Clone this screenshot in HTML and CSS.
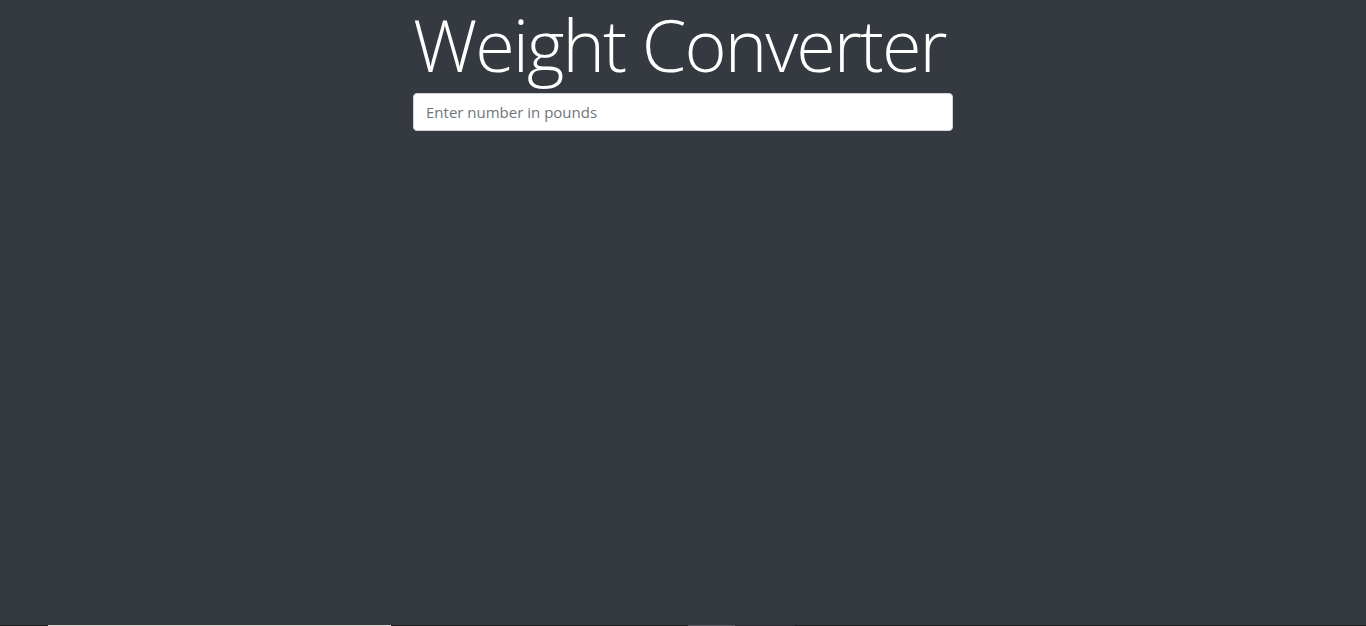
FILE: index.html
```html
<!DOCTYPE html>
<html lang="en">
<head>
  <meta charset="UTF-8">
  <title>Weight Converter</title>
  <link rel="stylesheet" href="styles.css">
</head>
<body>
  <div class="container">
    <div class="col">
      <h1 class="title">Weight Converter</h1>
      <form>
        <input type="number" id="lbsInput" class="field" placeholder="Enter number in pounds">
      </form>
    </div>
  </div>

  <div class="strip">
    <span class="s-dark s1"></span>
    <span class="s-light s2"></span>
    <span class="s-dark s3"></span>
    <span class="s-gray s4"></span>
    <span class="s-mid s5"></span>
    <span class="s-dark s6"></span>
  </div>
</body>
</html>
```

FILE: styles.css
```css
* {
  box-sizing: border-box;
}
html, body {
  height: 100%;
}
body {
  margin: 0;
  background-color: #343a40;
  color: #fff;
  font-family: "Segoe UI", "Open Sans", "Noto Sans", Arial, sans-serif;
  display: flex;
  flex-direction: column;
}
.container {
  width: 1140px;
  margin: 0 auto;
  display: flex;
  justify-content: center;
}
.col {
  width: 570px;
  padding: 0 15px;
}
.title {
  font-size: 72px;
  font-weight: 300;
  line-height: 1.2;
  margin: 1px 0 6px;
  letter-spacing: -2px;
  white-space: nowrap;
}
form {
  margin: 0;
}
.field {
  display: block;
  width: 100%;
  height: 38px;
  padding: 6px 12px;
  font-family: inherit;
  font-size: 15px;
  color: #495057;
  background-color: #fff;
  border: 1px solid #ced4da;
  border-radius: 4px;
  outline: none;
}
.field::placeholder {
  color: #6c757d;
}
.strip {
  margin-top: auto;
  height: 1px;
  display: flex;
}
.strip span {
  height: 1px;
}
.s-dark { background: #1b1d20; }
.s-light { background: #d4d4d4; }
.s-gray { background: #55585c; }
.s-mid { background: #2a2d31; }
.s1 { width: 48px; }
.s2 { width: 343px; }
.s3 { width: 297px; }
.s4 { width: 47px; }
.s5 { width: 60px; }
.s6 { flex: 1; }
```
